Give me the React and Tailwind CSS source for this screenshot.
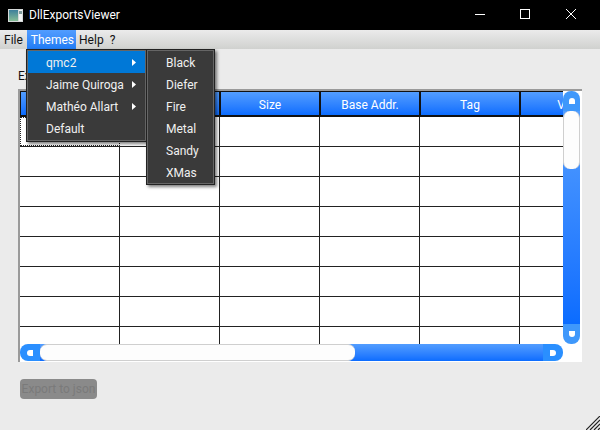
import React from "react";

const columns = ["Name", "Ordinal", "Size", "Base Addr.", "Tag", "Version"];
const rows = [0, 1, 2, 3, 4, 5, 6, 7];

const AppIcon = () => (
  <svg width="15" height="13" viewBox="0 0 15 13">
    <defs>
      <linearGradient id="appIconFill" x1="0" y1="0" x2="0" y2="1">
        <stop offset="0" stopColor="#3d7f9c" />
        <stop offset="1" stopColor="#86bd96" />
      </linearGradient>
    </defs>
    <rect width="15" height="13" fill="#d5d9d9" />
    <rect x="1" y="1" width="9" height="11" fill="url(#appIconFill)" />
    <rect x="11" y="1" width="3" height="11" fill="#f2f4f4" />
    <rect x="11" y="2" width="3" height="3" fill="#7f9a9a" />
  </svg>
);

const WindowButtons = () => (
  <div className="flex items-center">
    <svg width="46" height="30" viewBox="0 0 46 30">
      <path d="M13 14.5H23" stroke="#fff" />
    </svg>
    <svg width="46" height="30" viewBox="0 0 46 30">
      <rect x="12.5" y="9.5" width="9" height="9" fill="none" stroke="#fff" />
    </svg>
    <svg width="46" height="30" viewBox="0 0 46 30">
      <path d="M12 9L22 19M22 9L12 19" stroke="#fff" />
    </svg>
  </div>
);

const MenuRow = ({ label, active, arrow }) => (
  <div
    className={`h-[22px] pl-[18px] flex items-center justify-between text-[12px] text-[#f0f0f0] ${
      active ? "bg-[#0078d7]" : ""
    }`}
  >
    <span className="pt-[2px]">{label}</span>
    {arrow && (
      <svg width="5" height="7" viewBox="0 0 5 7" className="mr-[8px]">
        <path d="M0 0L4 3.5L0 7Z" fill="#fff" />
      </svg>
    )}
  </div>
);

const Table = () => (
  <div className="flex-1 min-w-0 overflow-hidden">
    <div className="flex w-[655px] h-[26px] border-b-2 border-[#111]">
      {columns.map((c, i) => (
        <div
          key={c}
          className={`shrink-0 pt-[2px] border-l border-r border-t border-[#111] bg-gradient-to-b from-[#529dff] to-[#0a6cff] text-white text-[12px] flex items-center justify-center ${
            i === 5 ? "w-[115px]" : "w-[100px]"
          }`}
        >
          {c}
        </div>
      ))}
    </div>
    {rows.map((r) => (
      <div key={r} className="flex w-[655px] h-[30px] border-b border-[#222]">
        {columns.map((c, i) => (
          <div
            key={c}
            className={`shrink-0 border-r border-[#222] ${i === 5 ? "w-[115px]" : "w-[100px]"} ${
              r === 0 && i === 0 ? "border border-dotted border-[#111]" : ""
            }`}
          />
        ))}
      </div>
    ))}
  </div>
);

const VerticalScroll = () => (
  <div className="w-[17px] h-full flex flex-col">
    <div className="h-[20px] bg-[#3f98fb] rounded-t-[8px] flex items-center justify-center">
      <div className="w-[6px] h-[6px] bg-white rounded-t-[3px]" />
    </div>
    <div className="flex-1 flex flex-col bg-gradient-to-b from-[#529dff] to-[#0a6cff]">
      <div className="h-[58px] bg-[#fdfdfd] border-l border-r border-[#cfcfcf] rounded-[7px]" />
    </div>
    <div className="h-[20px] bg-[#3f98fb] rounded-b-[8px] flex items-center justify-center">
      <div className="w-[6px] h-[6px] bg-white rounded-b-[3px]" />
    </div>
  </div>
);

const HorizontalScroll = () => (
  <div className="h-[17px] flex">
    <div className="w-[20px] bg-[#2a8fff] rounded-l-[8px] flex items-center justify-center">
      <div className="w-[6px] h-[6px] bg-white rounded-l-[3px]" />
    </div>
    <div className="flex-1 flex bg-gradient-to-b from-[#529dff] to-[#0a6cff]">
      <div className="w-[315px] bg-[#fdfdfd] border-t border-b border-[#cfcfcf] rounded-[7px]" />
    </div>
    <div className="w-[20px] bg-[#2a8fff] rounded-r-[8px] flex items-center justify-center">
      <div className="w-[6px] h-[6px] bg-white rounded-r-[3px]" />
    </div>
  </div>
);

export default function App() {
  return (
    <div className="relative w-[600px] h-[430px] overflow-hidden flex flex-col bg-[#ebebeb] font-['Roboto',sans-serif]">
      <div className="h-[30px] bg-black flex items-center justify-between pl-[8px]">
        <div className="flex items-center gap-[6px] text-white text-[12px]">
          <AppIcon />
          <span>DllExportsViewer</span>
        </div>
        <WindowButtons />
      </div>

      <div className="h-[19px] flex items-center pl-[1px] text-[12px] text-[#111] bg-gradient-to-b from-[#ebebeb] to-[#d0d1cf]">
        <span className="px-[3px] mr-[1px]">File</span>
        <span className="h-full pl-[4px] pr-[2px] flex items-center text-white bg-gradient-to-b from-[#529dff] to-[#1f7cf5]">
          Themes
        </span>
        <span className="px-[3px]">Help</span>
        <span className="px-[3px]">?</span>
      </div>

      <div className="flex-1 px-[18px] pt-[18px]">
        <div className="h-[22px] text-[12px] text-[#111]">Exports</div>
        <div className="w-[564px] h-[273px] flex flex-col bg-white border-t-2 border-l-2 border-[#9a9a9a] pr-[2px] pb-[1px]">
          <div className="flex-1 min-h-0 flex">
            <Table />
            <VerticalScroll />
          </div>
          <div className="pr-[17px]">
            <HorizontalScroll />
          </div>
        </div>
        <button className="mt-[17px] ml-[2px] w-[77px] h-[20px] rounded-[4px] bg-[#8a8a8a] text-[#7a7a7a] text-[12px] whitespace-nowrap">
          Export to json
        </button>
      </div>

      <div className="absolute left-[26px] top-[49px] w-[121px] h-[93px] p-[2px] bg-[#3a3a3a] shadow-[inset_0_0_0_1px_#222,inset_0_0_0_2px_#666,2px_2px_3px_rgba(0,0,0,0.5)]">
        <MenuRow label="qmc2" active arrow />
        <MenuRow label="Jaime Quiroga" arrow />
        <MenuRow label="Mathéo Allart" arrow />
        <MenuRow label="Default" />
      </div>
      <div className="absolute left-[146px] top-[49px] w-[69px] h-[136px] p-[2px] bg-[#3a3a3a] shadow-[inset_0_0_0_1px_#222,inset_0_0_0_2px_#666,2px_2px_3px_rgba(0,0,0,0.5)]">
        {["Black", "Diefer", "Fire", "Metal", "Sandy", "XMas"].map((t) => (
          <MenuRow key={t} label={t} />
        ))}
      </div>

      <svg className="absolute right-0 bottom-0" width="14" height="14" viewBox="0 0 14 14">
        <path d="M0 14L14 0M4 14L14 4M8 14L14 8M12 14L14 12" stroke="#222" strokeWidth="1.2" />
      </svg>
    </div>
  );
}
